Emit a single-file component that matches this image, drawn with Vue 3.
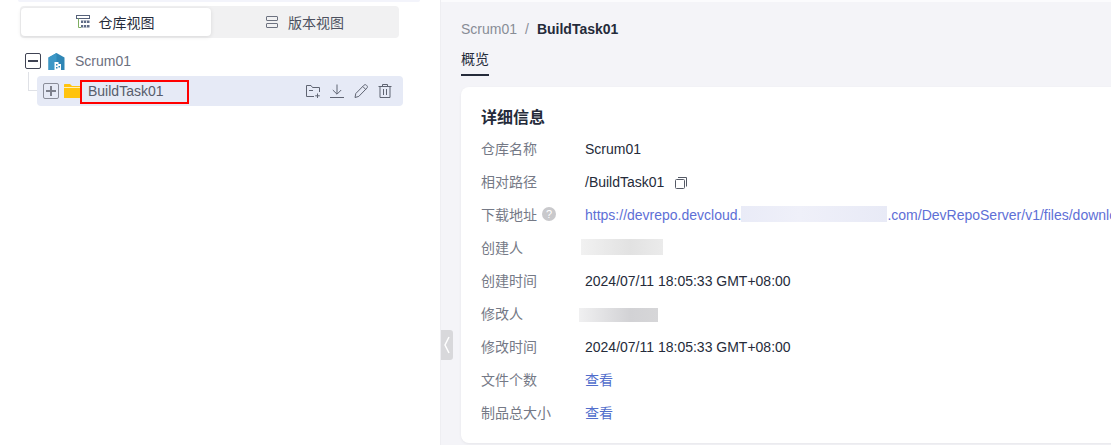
<script setup>
const rows = [
  { label: '仓库名称', value: 'Scrum01' },
  { label: '相对路径', value: '/BuildTask01', copy: true },
  { label: '下载地址', help: true, url: true },
  { label: '创建人', mask: 'mask-a' },
  { label: '创建时间', value: '2024/07/11 18:05:33 GMT+08:00' },
  { label: '修改人', mask: 'mask-b' },
  { label: '修改时间', value: '2024/07/11 18:05:33 GMT+08:00' },
  { label: '文件个数', link: '查看' },
  { label: '制品总大小', link: '查看' },
]
</script>

<template>
  <div class="page">
    <aside class="side">
      <div class="strip"></div>
      <div class="tabs">
        <div class="tab active">
          <svg width="16" height="16" viewBox="0 0 16 16" fill="none">
            <rect x="1.5" y="1.5" width="13" height="3" stroke="#56617a" />
            <path d="M3.5 4.5V13.5H6" stroke="#7fae62" />
            <rect x="6" y="6.5" width="8.5" height="2.5" fill="#5f6b85" />
            <rect x="6" y="11" width="8.5" height="2.5" fill="#5f6b85" />
            <path d="M8.5 6.5V13.5M11.5 6.5V13.5" stroke="#fff" stroke-width=".8" />
          </svg>
          <span>仓库视图</span>
        </div>
        <div class="tab">
          <svg width="14" height="14" viewBox="0 0 14 14" fill="none" stroke="#6d7280">
            <rect x="1.5" y="1.5" width="11" height="4" rx=".5" />
            <rect x="1.5" y="8.5" width="11" height="4" rx=".5" />
          </svg>
          <span>版本视图</span>
        </div>
      </div>

      <div class="tree">
        <div class="node root">
          <span class="box dark"><i class="h"></i></span>
          <svg class="repo" width="17" height="17" viewBox="0 0 17 17">
            <path d="M0.5 4.5L8.5 0L16.5 4.5V17H0.5Z" fill="#2f86b5" />
            <path d="M0.5 4.5L8.5 0V17H0.5Z" fill="#3c97c6" />
            <path d="M6.5 9H10.5V11H13V17H6.5Z" fill="#fff" />
            <path d="M8 11H9.5V12.5H8ZM8 14H9.5V15.5H8ZM10.5 13H12V14.5H10.5Z" fill="#2f86b5" />
          </svg>
          <span class="root-name">Scrum01</span>
        </div>
        <div class="node child">
          <i class="connector"></i>
          <span class="box grey"><i class="h"></i><i class="v"></i></span>
          <svg class="folder" width="17" height="14" viewBox="0 0 17 14">
            <path d="M0 1C0 .4.4 0 1 0H6L8 2H17V14H0Z" fill="#ffc30d" />
            <rect x="0" y="3" width="17" height="1" fill="#fff0b8" />
          </svg>
          <span class="child-name">BuildTask01</span>
          <span class="actions">
            <svg width="16" height="16" viewBox="0 0 16 16" fill="none" stroke="#5f6472" stroke-width="1">
              <path d="M9 13.5H1.5V2.5H6L7.5 4.5H14.5V9" />
              <path d="M4 7.5H8M12.5 10.5V15M10.2 12.8H14.8" />
            </svg>
            <svg width="16" height="16" viewBox="0 0 16 16" fill="none" stroke="#5f6472" stroke-width="1">
              <path d="M8 1.5V11M3.8 7L8 11.2L12.2 7M1 14.5H15" />
            </svg>
            <svg width="16" height="16" viewBox="0 0 16 16" fill="none" stroke="#5f6472" stroke-width="1">
              <path d="M2 14.5L2.8 10.5L11 2.2C11.7 1.5 12.7 1.5 13.4 2.2L13.9 2.7C14.6 3.4 14.6 4.4 13.9 5.1L5.8 13.4Z" />
              <path d="M9.8 3.5L12.7 6.4" />
            </svg>
            <svg width="16" height="16" viewBox="0 0 16 16" fill="none" stroke="#5f6472" stroke-width="1">
              <path d="M1.5 3.5H14.5M5.5 3.5V1.5H10.5V3.5M3 3.5V14.5H13V3.5M6.5 6V12M9.5 6V12" />
            </svg>
          </span>
          <i class="highlight"></i>
        </div>
      </div>
    </aside>

    <main class="main">
      <div class="crumbs">
        <span class="crumb-link">Scrum01</span>
        <span class="crumb-sep">/</span>
        <strong>BuildTask01</strong>
      </div>
      <div class="page-tabs"><span class="page-tab">概览</span></div>
      <section class="card">
        <h2>详细信息</h2>
        <div v-for="row in rows" :key="row.label" class="row">
          <span class="label">
            {{ row.label }}
            <i v-if="row.help" class="help">?</i>
          </span>
          <span v-if="row.value" class="value">
            {{ row.value }}
            <svg v-if="row.copy" class="copy" width="14" height="14" viewBox="0 0 14 14" fill="none" stroke="#555a66">
              <rect x="1.5" y="3.5" width="9" height="9" rx="1" />
              <path d="M4 1.5H12.5V10.5" />
            </svg>
          </span>
          <span v-else-if="row.url" class="value url">https://devrepo.devcloud.<i class="url-mask"></i>.com/DevRepoServer/v1/files/download</span>
          <span v-else-if="row.mask" class="mask" :class="row.mask"></span>
          <span v-else class="value link">{{ row.link }}</span>
        </div>
      </section>
      <div class="handle">
        <svg width="8" height="18" viewBox="0 0 8 18" fill="none" stroke="#fff" stroke-width="1.5">
          <path d="M6 1L2 9L6 17" />
        </svg>
      </div>
    </main>
  </div>
</template>

<style>
html, body { margin: 0; padding: 0; overflow: hidden; background: #fff; }
</style>

<style scoped>
.page {
  display: flex;
  width: 1111px;
  height: 445px;
  overflow: hidden;
  font-family: "Liberation Sans", "Noto Sans CJK SC", sans-serif;
  font-size: 14px;
  color: #252b3a;
}
.side {
  flex: 0 0 441px;
  box-sizing: border-box;
  border-right: 1px solid #eeeef2;
  background: #fff;
}
.strip {
  height: 2px;
  width: 402px;
  margin-left: 18px;
  background: #f3f4fb;
  border-radius: 0 0 3px 3px;
}
.tabs {
  display: flex;
  box-sizing: border-box;
  width: 379px;
  height: 32px;
  margin: 4px 0 0 20px;
  padding: 2px 1px;
  background: #f1f1f2;
  border-radius: 4px;
}
.tab {
  display: flex;
  align-items: center;
  justify-content: center;
  gap: 9px;
  flex: 0 0 187px;
  height: 28px;
  color: #4d5160;
}
.tab.active {
  flex: 0 0 190px;
  box-sizing: border-box;
  padding-right: 3px;
  gap: 8px;
  background: #fff;
  color: #252b3a;
  border-radius: 4px;
  box-shadow: 0 1px 4px rgba(0, 0, 0, .1);
}
.tree { margin-top: 13px; }
.node {
  position: relative;
  display: flex;
  align-items: center;
}
.root {
  height: 20px;
  padding-left: 25px;
}
.child {
  height: 30px;
  width: 366px;
  margin: 5px 0 0 37px;
  padding-left: 6px;
  box-sizing: border-box;
  background: #e6eaf6;
  border-radius: 4px;
}
.box {
  position: relative;
  display: block;
  flex: none;
  box-sizing: border-box;
  width: 16px;
  height: 16px;
  border: 1.5px solid #3f4353;
  border-radius: 2px;
  background: #fff;
}
.box.grey {
  border-color: #8a8d99;
  background: transparent;
}
.box .h, .box .v {
  position: absolute;
  background: #3f4353;
}
.box.grey .h, .box.grey .v { background: #7d808c; }
.box .h { left: 2px; right: 2px; top: 5.5px; height: 2px; }
.box .v { top: 2px; bottom: 2px; left: 5.5px; width: 2px; }
.repo { margin-left: 7px; }
.root-name { margin-left: 10px; color: #6c7080; }
.folder { margin-left: 5px; }
.child-name { margin-left: 7px; color: #575d6c; }
.connector {
  position: absolute;
  left: -9px;
  top: -4px;
  width: 9px;
  height: 19px;
  border-left: 1px solid #dfe1e6;
  border-bottom: 1px solid #dfe1e6;
  box-sizing: border-box;
}
.highlight {
  position: absolute;
  left: 43px;
  top: 4px;
  width: 109px;
  height: 24px;
  box-sizing: border-box;
  border: 2px solid #f00;
}
.actions {
  display: flex;
  gap: 8px;
  margin-left: auto;
  margin-right: 10px;
}
.main {
  position: relative;
  flex: 1;
  min-width: 0;
  box-sizing: border-box;
  padding: 17px 0 0 20px;
  border-top: 2px solid #fbfbfd;
  background: #f4f4f8;
}
.crumbs {
  display: flex;
  height: 20px;
  line-height: 20px;
}
.crumb-link { color: #888c96; }
.crumb-sep { margin: 0 8px; color: #8a8e99; }
.crumbs strong { color: #252b3a; }
.page-tabs { margin-top: 10px; }
.page-tab {
  display: inline-block;
  height: 20px;
  line-height: 20px;
  padding-bottom: 5px;
  border-bottom: 2px solid #252b3a;
  color: #252b3a;
}
.card {
  box-sizing: border-box;
  width: 900px;
  height: 356px;
  margin-top: 11px;
  padding: 19px 20px 0;
  background: #fff;
  border-radius: 8px;
  box-shadow: 0 1px 3px rgba(0, 0, 0, .06);
}
h2 {
  margin: 0 0 2px;
  height: 24px;
  line-height: 24px;
  font-size: 16px;
  font-weight: 700;
  color: #252b3a;
}
.row {
  display: flex;
  align-items: center;
  height: 33px;
  white-space: nowrap;
}
.label {
  display: flex;
  align-items: center;
  flex: 0 0 104px;
  padding-bottom: 2px;
  box-sizing: border-box;
  color: #757986;
}
.help {
  width: 14px;
  height: 14px;
  margin-left: 5px;
  border-radius: 50%;
  background: #c9c9cc;
  color: #fff;
  font-size: 11px;
  font-style: normal;
  line-height: 14px;
  text-align: center;
}
.value { color: #252b3a; }
.copy {
  margin-left: 6px;
  vertical-align: -3px;
}
.url, .link { color: #5e6fd6; }
.link { color: #526ecc; padding-bottom: 2px; }
.url-mask {
  display: inline-block;
  width: 146px;
  height: 16px;
  vertical-align: -2px;
  background: linear-gradient(90deg, #e9ebf7, #eff0f9 40%, #e8eaf6);
}
.mask { display: block; }
.mask-a {
  width: 82px;
  height: 16px;
  margin: -1px 0 0 -4px;
  background: linear-gradient(90deg, #f1f1f1, #e2e2e2 60%, #ebebeb);
}
.mask-b {
  width: 79px;
  height: 14px;
  margin: 2px 0 0 -6px;
  background: linear-gradient(90deg, #f0f0f1, #d2d2d5 65%, #d6d6d8);
}
.handle {
  position: absolute;
  left: 0;
  top: 328px;
  display: flex;
  align-items: center;
  justify-content: center;
  width: 12px;
  height: 30px;
  background: #d8d8db;
  border-radius: 0 3px 3px 0;
}
</style>
